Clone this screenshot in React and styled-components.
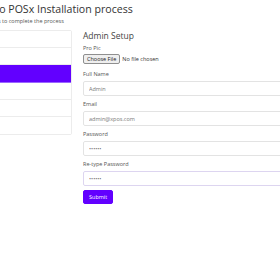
import React, { useEffect, useRef } from "react";
import styled, { createGlobalStyle } from "styled-components";

const GlobalStyle = createGlobalStyle`
  html, body {
    margin: 0;
    padding: 0;
    background: #fff;
  }
  body {
    overflow: hidden;
    font-family: "Open Sans", "Liberation Sans", sans-serif;
    color: #444;
  }
`;

const Page = styled.div`
  width: 280px;
  height: 280px;
  display: flex;
  justify-content: center;
  overflow: hidden;
`;

const Container = styled.div`
  flex-shrink: 0;
  width: 386px;
  padding-top: 2px;
`;

const Title = styled.h1`
  margin: 0;
  font-size: 10.6px;
  line-height: 14px;
  font-weight: 400;
  color: #333;
  white-space: nowrap;
`;

const Subtitle = styled.p`
  margin: 1px 0 5px;
  font-size: 5.5px;
  line-height: 8px;
  color: #555;
  white-space: nowrap;
`;

const Row = styled.div`
  display: flex;
  gap: 11px;
  align-items: flex-start;
`;

const StepList = styled.ul`
  list-style: none;
  margin: 0;
  padding: 0;
  width: 123px;
  flex-shrink: 0;
  border: 1px solid #ececec;
  border-radius: 2px;
`;

const Step = styled.li`
  box-sizing: border-box;
  height: ${(p) => (p.active ? "18px" : "17px")};
  padding: 0 8px;
  display: flex;
  align-items: center;
  font-size: 5.5px;
  color: ${(p) => (p.active ? "#fff" : "#555")};
  background: ${(p) => (p.active ? "#6200ff" : "#fff")};
  border-bottom: 1px solid ${(p) => (p.active ? "#9a66ff" : "#ececec")};
  &:last-child {
    border-bottom: none;
  }
`;

const Form = styled.form`
  flex: 1;
  min-width: 0;
  padding-top: 1px;
`;

const Heading = styled.h2`
  margin: 0 0 3px;
  font-size: 8.5px;
  line-height: 10px;
  font-weight: 400;
  color: #444;
`;

const Group = styled.div`
  margin-bottom: ${(p) => p.gap || "4px"};
`;

const Label = styled.label`
  display: block;
  font-size: 5.5px;
  line-height: 8px;
  margin-bottom: ${(p) => (p.tight ? "2px" : "3px")};
  color: #555;
`;

const FileRow = styled.div`
  display: flex;
  align-items: center;
  gap: 2px;
  font-size: 5.5px;
  color: #333;
`;

const FileButton = styled.span`
  box-sizing: border-box;
  height: 10px;
  padding: 0 3px;
  display: inline-flex;
  align-items: center;
  background: #efefef;
  border: 1px solid #8f8f8f;
  border-radius: 2px;
  color: #222;
`;

const Input = styled.input`
  box-sizing: border-box;
  display: block;
  width: 100%;
  height: 15px;
  padding: 0 5px;
  font-family: inherit;
  font-size: 5.5px;
  color: #777;
  background: #fff;
  border: 1px solid ${(p) => (p.$focused ? "#ddd5f0" : "#e3e3e3")};
  border-radius: 2px;
  outline: none;
  caret-color: #222;
`;

const Submit = styled.button`
  display: block;
  height: 14px;
  padding: 0 5px;
  font-family: inherit;
  font-size: 5.5px;
  color: #fff;
  background: #6200ff;
  border: 1px solid #6200ff;
  border-radius: 2px;
`;

const steps = [
  "Requirements",
  "Database Setup",
  "Admin Setup",
  "Company Setup",
  "Settings",
  "Finish",
];

export default function App() {
  const retype = useRef(null);

  useEffect(() => {
    if (retype.current) {
      retype.current.focus({ preventScroll: true });
      const len = retype.current.value.length;
      retype.current.setSelectionRange(len, len);
    }
  }, []);

  return (
    <>
      <GlobalStyle />
      <Page>
        <Container>
          <Title>Welcome to POSx Installation process</Title>
          <Subtitle>Now follow the steps to complete the process</Subtitle>
          <Row>
            <StepList>
              {steps.map((s, i) => (
                <Step key={s} active={i === 2}>
                  {s}
                </Step>
              ))}
            </StepList>
            <Form onSubmit={(e) => e.preventDefault()}>
              <Heading>Admin Setup</Heading>
              <Group gap="6px">
                <Label tight>Pro Pic</Label>
                <FileRow>
                  <FileButton>Choose File</FileButton>
                  <span>No file chosen</span>
                </FileRow>
              </Group>
              <Group>
                <Label>Full Name</Label>
                <Input type="text" defaultValue="Admin" />
              </Group>
              <Group>
                <Label>Email</Label>
                <Input type="email" defaultValue="admin@xpos.com" />
              </Group>
              <Group>
                <Label>Password</Label>
                <Input type="password" defaultValue="123456" />
              </Group>
              <Group>
                <Label>Re-type Password</Label>
                <Input ref={retype} type="password" defaultValue="123456" $focused />
              </Group>
              <Submit type="submit">Submit</Submit>
            </Form>
          </Row>
        </Container>
      </Page>
    </>
  );
}
